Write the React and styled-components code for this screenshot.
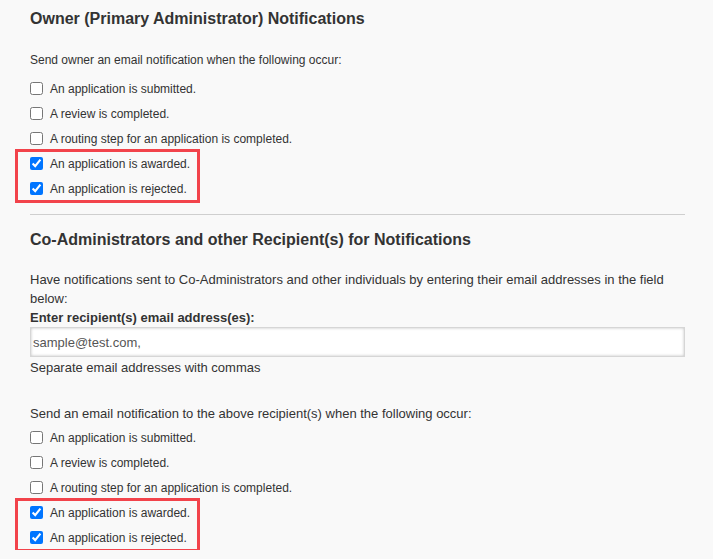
import React from 'react'
import styled, { createGlobalStyle } from 'styled-components'

const GlobalStyle = createGlobalStyle`
  html, body {
    margin: 0;
    padding: 0;
    background: #f9f9f9;
  }
  body {
    font-family: Arial, "Liberation Sans", sans-serif;
    color: #333;
  }
`

const events = [
  { label: 'An application is submitted.', checked: false },
  { label: 'A review is completed.', checked: false },
  { label: 'A routing step for an application is completed.', checked: false },
  { label: 'An application is awarded.', checked: true },
  { label: 'An application is rejected.', checked: true },
]

function CheckList({ prefix, top }) {
  const plain = events.filter((e) => !e.checked)
  const marked = events.filter((e) => e.checked)
  return (
    <List $top={top}>
      {plain.map((e, i) => (
        <Row key={i}>
          <Box type="checkbox" id={`${prefix}-${i}`} />
          <RowLabel htmlFor={`${prefix}-${i}`}>{e.label}</RowLabel>
        </Row>
      ))}
      <Highlight>
        {marked.map((e, i) => (
          <Row key={i}>
            <Box type="checkbox" id={`${prefix}-m${i}`} defaultChecked />
            <RowLabel htmlFor={`${prefix}-m${i}`}>{e.label}</RowLabel>
          </Row>
        ))}
      </Highlight>
    </List>
  )
}

export default function App() {
  return (
    <>
      <GlobalStyle />
      <Page>
        <Heading>Owner (Primary Administrator) Notifications</Heading>
        <Intro $top={22} $size={12}>Send owner an email notification when the following occur:</Intro>
        <CheckList prefix="owner" top={6} />

        <Divider />

        <Heading $top={15}>Co-Administrators and other Recipient(s) for Notifications</Heading>
        <Intro $top={20} $size={13}>
          Have notifications sent to Co-Administrators and other individuals by entering their email
          addresses in the field below:
        </Intro>
        <FieldLabel htmlFor="recipients">Enter recipient(s) email address(es):</FieldLabel>
        <Input id="recipients" type="text" defaultValue="sample@test.com," />
        <Hint>Separate email addresses with commas</Hint>
        <Intro $top={27} $size={13}>
          Send an email notification to the above recipient(s) when the following occur:
        </Intro>
        <CheckList prefix="co" top={2} />
      </Page>
    </>
  )
}

const Page = styled.main`
  padding: 9px 28px 0 30px;
`

const Heading = styled.h2`
  margin: ${(p) => p.$top ?? 0}px 0 0;
  font-size: 16px;
  font-weight: bold;
  line-height: 20px;
  color: #333;
`

const Intro = styled.p`
  margin: ${(p) => p.$top}px 0 0;
  font-size: ${(p) => p.$size}px;
  line-height: 19px;
`

const List = styled.div`
  display: flex;
  flex-direction: column;
  margin-top: ${(p) => p.$top}px;
`

const Row = styled.div`
  display: flex;
  align-items: center;
  height: 25px;
`

const Box = styled.input`
  margin: 0 7px 0 0;
  width: 13px;
  height: 13px;
  flex-shrink: 0;
`

const RowLabel = styled.label`
  font-size: 12px;
  line-height: 16px;
`

const Highlight = styled.div`
  position: relative;

  &::before {
    content: '';
    position: absolute;
    top: -2px;
    bottom: -2px;
    left: -15px;
    width: 185px;
    border: 3px solid #f2434b;
    box-sizing: border-box;
    pointer-events: none;
  }
`

const Divider = styled.hr`
  margin: 13px 0 0;
  border: 0;
  border-top: 1px solid #cfcfcf;
`

const FieldLabel = styled.label`
  display: block;
  font-size: 13px;
  font-weight: bold;
  line-height: 19px;
`

const Input = styled.input`
  display: block;
  box-sizing: border-box;
  width: 100%;
  height: 30px;
  margin: 0;
  padding: 0 2px;
  border: 1px solid #d6d6d6;
  box-shadow: inset 0 0 3px rgba(0, 0, 0, 0.25);
  background: #fff;
  font-family: inherit;
  font-size: 13px;
  color: #555;
  outline: none;
`

const Hint = styled.div`
  margin-top: 1px;
  font-size: 13px;
  line-height: 19px;
`
